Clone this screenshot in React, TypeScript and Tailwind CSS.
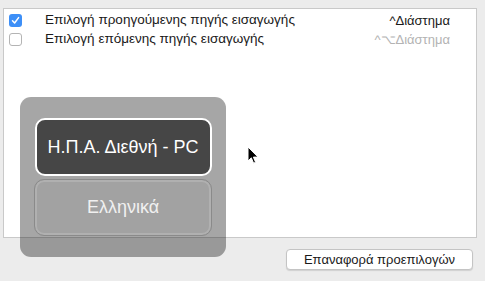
import { useState } from "react";

interface Shortcut {
  label: string;
  keys: string;
  enabled: boolean;
}

const shortcuts: Shortcut[] = [
  { label: "Επιλογή προηγούμενης πηγής εισαγωγής", keys: "^Διάστημα", enabled: true },
  { label: "Επιλογή επόμενης πηγής εισαγωγής", keys: "^⌥Διάστημα", enabled: false },
];

const Checkbox = ({ checked }: { checked: boolean }) =>
  checked ? (
    <span className="flex h-[13px] w-[13px] items-center justify-center rounded-[3px] bg-[#3d8ff7]">
      <svg width="9" height="9" viewBox="0 0 9 9">
        <path d="M1.5 4.8 L3.6 7 L7.6 1.6" fill="none" stroke="white" strokeWidth="1.5" strokeLinecap="round" strokeLinejoin="round" />
      </svg>
    </span>
  ) : (
    <span className="block h-[13px] w-[13px] rounded-[3px] border border-[#b4b4b4] bg-white" />
  );

const App = () => {
  const [items] = useState(shortcuts);

  return (
    <div
      className="relative h-[281px] w-[485px] overflow-hidden bg-[#ececec] text-[13px] text-[#1a1a1a]"
      style={{ fontFamily: '"Liberation Sans", "Noto Sans", sans-serif' }}
    >
      <div className="pl-[3px] pr-[8px] pt-[8px]">
        <div className="h-[230px] border border-[#c9c9c9] bg-white pt-[2px]">
          {items.map((item) => (
            <div key={item.label} className="flex h-[19px] items-center pl-[5px] pr-[26px]">
              <Checkbox checked={item.enabled} />
              <span className="ml-[23px] flex-1 text-[13.5px]">{item.label}</span>
              <span className={item.enabled ? "text-[#1a1a1a]" : "text-[#b3b3b3]"}>{item.keys}</span>
            </div>
          ))}
        </div>
      </div>

      <div className="mt-[11px] flex justify-end pr-[12px]">
        <button className="h-[21px] w-[187px] rounded-[4px] border border-[#c4c4c4] bg-white text-[13px] leading-none shadow-[0_1px_1px_rgba(0,0,0,0.12)]">
          Επαναφορά προεπιλογών
        </button>
      </div>

      {/* input source switcher HUD */}
      <div className="absolute left-[20px] top-[97px] flex h-[160px] w-[206px] flex-col items-center gap-[3px] rounded-[11px] bg-black/35 pt-[21px]">
        <div className="flex h-[58px] w-[177px] items-center justify-center rounded-[10px] border-2 border-white bg-[#464646] text-[18px] text-white">
          Η.Π.Α. Διεθνή - PC
        </div>
        <div className="flex h-[57px] w-[178px] items-center justify-center rounded-[10px] border border-[#8a8a8a] bg-[#a2a2a2] p-[2px] text-[18px] text-[#f0f0f0] shadow-[inset_0_0_0_2px_#b0b0b0]">
          Ελληνικά
        </div>
      </div>

      <svg className="absolute left-[247px] top-[146px]" width="12" height="19" viewBox="0 0 12 19">
        <path d="M1 1 L1 15 L4.3 11.8 L6.6 17.2 L8.6 16.3 L6.4 11.1 L11 11.1 Z" fill="black" stroke="white" strokeWidth="1" strokeLinejoin="round" />
      </svg>
    </div>
  );
};

export default App;
